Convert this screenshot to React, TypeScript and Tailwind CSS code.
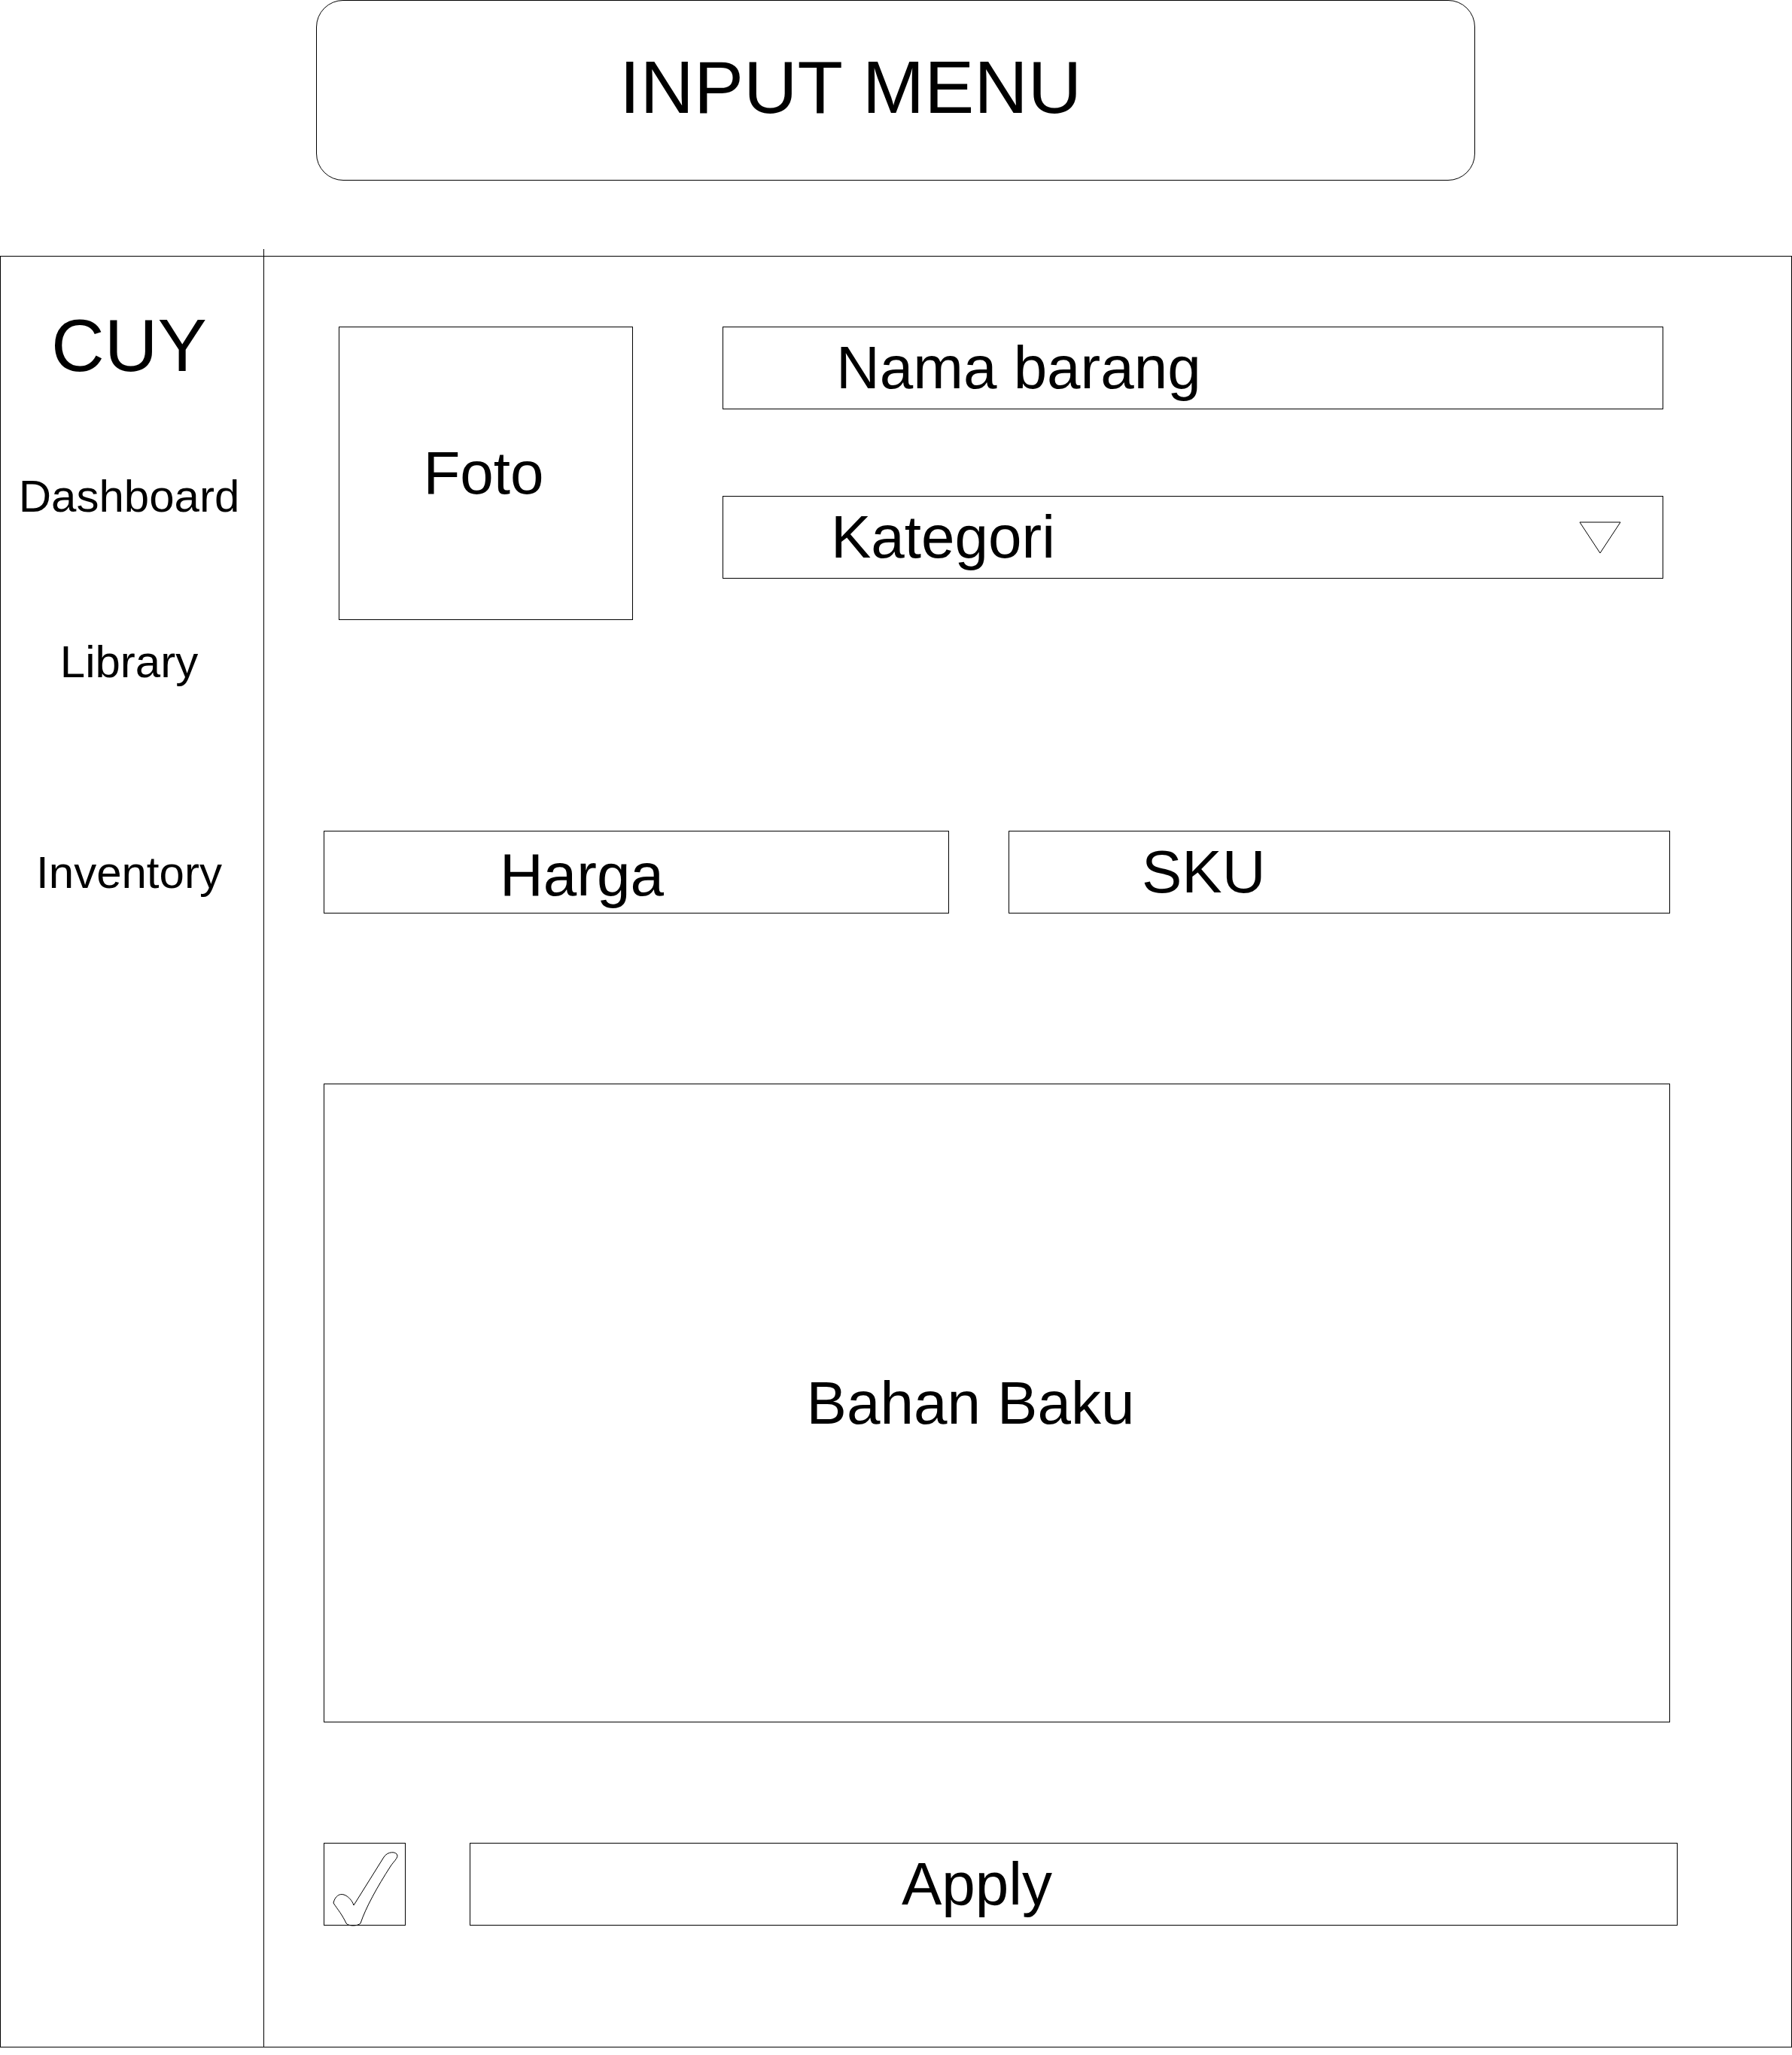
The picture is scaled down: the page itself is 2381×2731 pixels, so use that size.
const FieldBox = ({ label, className }: { label: string; className: string }) => (
  <div className={"border border-black flex items-center h-[110px] text-[80px] leading-none " + className}>
    <span>{label}</span>
  </div>
);

const CheckMark = () => (
  <svg width="109" height="110" viewBox="0 0 109 110" fill="none">
    <path
      d="M12 79 C14 70 20 66 26 68 C32 70 37 76 39 82 L79 18 C84 10 96 10 97 16 C97 20 92 24 88 30 C70 58 55 85 48 106 C44 110 32 110 29 106 C24 95 18 88 12 79 Z"
      stroke="#000"
      strokeWidth="1"
    />
  </svg>
);

const App = () => {
  return (
    <div className="w-[2381px] h-[2731px] bg-white text-black font-['Liberation_Sans',Arial,sans-serif]">
      {/* header */}
      <div className="ml-[420px] w-[1540px] h-[240px] border border-black rounded-[36px] flex items-center pl-[402px] pb-[10px]">
        <h1 className="text-[99px] leading-none">INPUT MENU</h1>
      </div>

      {/* main frame */}
      <div className="mt-[100px] w-[2381px] h-[2381px] border border-black flex">
        {/* sidebar */}
        <div className="w-[349px] flex flex-col items-center pr-[8px] pt-[69px]">
          <div className="text-[98px] leading-none">CUY</div>
          <div className="mt-[122px] text-[60px] leading-none">Dashboard</div>
          <div className="mt-[160px] text-[60px] leading-none">Library</div>
          <div className="mt-[220px] text-[60px] leading-none">Inventory</div>
        </div>
        <div className="w-px bg-black -mt-[10px] -mb-[1px]" />

        {/* form */}
        <div className="flex-1 pl-[79px] pt-[93px]">
          <div className="flex items-start">
            <div className="ml-[20px] w-[391px] h-[390px] border border-black flex items-center justify-center pr-[6px]">
              <span className="text-[80px] leading-none">Foto</span>
            </div>
            <div className="ml-[119px] w-[1250px] flex flex-col gap-[115px]">
              <FieldBox label="Nama barang" className="pl-[150px]" />
              <div className="border border-black flex items-center justify-between h-[110px] pl-[143px] pr-[55px] text-[80px] leading-none">
                <span>Kategori</span>
                <svg width="56" height="43" viewBox="0 0 56 43" fill="none">
                  <polygon points="1,1 55,1 28,42" stroke="#000" strokeWidth="1" />
                </svg>
              </div>
            </div>
          </div>

          <div className="mt-[280px] flex gap-[79px]">
            <FieldBox label="Harga" className="w-[831px] pl-[233px] pt-[8px]" />
            <FieldBox label="SKU" className="w-[879px] pl-[176px]" />
          </div>

          <div className="mt-[226px] w-[1789px] h-[849px] border border-black flex items-center justify-center pr-[70px]">
            <span className="text-[80px] leading-none">Bahan Baku</span>
          </div>

          <div className="mt-[160px] flex gap-[85px]">
            <div className="w-[109px] h-[110px] border border-black">
              <CheckMark />
            </div>
            <FieldBox label="Apply" className="w-[1605px] pl-[573px]" />
          </div>
        </div>
      </div>
    </div>
  );
};

export default App;
